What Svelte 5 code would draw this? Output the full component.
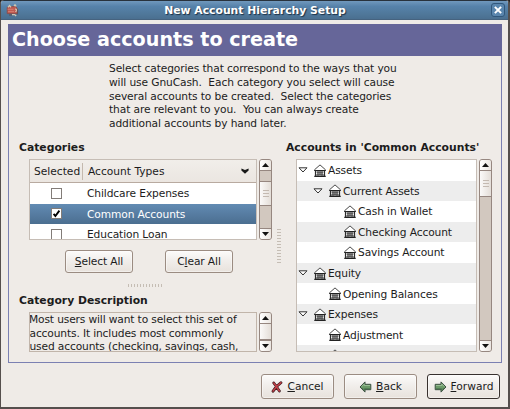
<script>
  const types = [
    { name: 'Childcare Expenses', on: false },
    { name: 'Common Accounts', on: true },
    { name: 'Education Loan', on: false }
  ];
  const tree = [
    { name: 'Assets', depth: 0, open: true },
    { name: 'Current Assets', depth: 1, open: true },
    { name: 'Cash in Wallet', depth: 2 },
    { name: 'Checking Account', depth: 2 },
    { name: 'Savings Account', depth: 2 },
    { name: 'Equity', depth: 0, open: true },
    { name: 'Opening Balances', depth: 1 },
    { name: 'Expenses', depth: 0, open: true },
    { name: 'Adjustment', depth: 1 },
    { name: '', depth: 1 }
  ];
</script>

{#snippet scrollbar(before, size, height)}
  <div class="scroll" style="height:{height}px">
    <div class="arrow"><svg width="7" height="4" viewBox="0 0 7 4"><path d="M0 4L3.5 0L7 4Z" fill="#111" /></svg></div>
    <div class="track">
      <div class="thumb" class:offset={before > 0} style="margin-top:{before}px;height:{size}px">
        {#if size > 18}<i></i><i></i><i></i>{/if}
      </div>
    </div>
    <div class="arrow low"><svg width="7" height="4" viewBox="0 0 7 4"><path d="M0 0L3.5 4L7 0Z" fill="#111" /></svg></div>
  </div>
{/snippet}

{#snippet arrowIcon(flip)}
  <svg class="ico" width="13" height="12" viewBox="0 0 13 12">
    <g transform={flip ? 'translate(13 0) scale(-1 1)' : ''}>
      <path d="M1 6L6 .9V3.3H11.8V8.7H6V11.1Z" fill="#6b9a68" stroke="#3c5042" stroke-width="1" />
      <path d="M2.6 5.5L5.2 3.2V4.5H11" fill="none" stroke="#a4c6a0" stroke-width=".8" />
      <path d="M3 7L5.5 9V7.7H11" fill="none" stroke="#466f4b" stroke-width=".8" />
    </g>
  </svg>
{/snippet}

<div class="window">
  <header class="title">
    <svg class="app" width="13" height="13" viewBox="0 0 13 13">
      <path d="M1.2 3.5L3 2.6H9.6L11 4V9.6H1.2Z" fill="#c05a50" stroke="#8a4a46" stroke-width=".8" />
      <path d="M1.6 5.3H7.5M2 7.6H8" stroke="#d98679" stroke-width=".8" />
      <path d="M2 3.4L3.5 1.6L5 3.2M8 2.2L9 .8L10.2 2.4M9.2 4.8L10.8 6L9.6 8M6 10.6H8.6L10.2 12" fill="none" stroke="#cfc7b4" stroke-width="1.3" />
      <path d="M3 11H6M11.6 5V10.5" stroke="#5f4f55" stroke-width="1" />
    </svg>
    <span>New Account Hierarchy Setup</span>
    <div class="close"><svg width="8" height="8" viewBox="0 0 8 8"><path d="M1.6 1.6L6.4 6.4M6.4 1.6L1.6 6.4" stroke="#fff" stroke-width="2" stroke-linecap="square" /></svg></div>
  </header>
  <main>
    <h1>Choose accounts to create</h1>
    <div class="intro">
      <div>Select categories that correspond to the ways that you</div>
      <div>will use GnuCash.&nbsp; Each category you select will cause</div>
      <div>several accounts to be created.&nbsp; Select the categories</div>
      <div>that are relevant to you.&nbsp; You can always create</div>
      <div>additional accounts by hand later.</div>
    </div>
    <div class="panes">
      <section class="left">
        <h2>Categories</h2>
        <div class="scroller">
          <div class="table">
            <div class="thead">
              <span class="c1">Selected</span><span class="c2">Account Types</span>
              <svg width="8" height="6" viewBox="0 0 8 6"><path d="M.4 .5L4 2L7.6 .5V2.4L4 5.8L.4 2.4Z" fill="#1a1a1a" /></svg>
            </div>
            {#each types as t}
              <div class="row" class:sel={t.on}>
                <span class="box">{#if t.on}<svg width="9" height="9" viewBox="0 0 9 9"><path d="M1.6 4.8L3.4 7L7.4 1.6" fill="none" stroke="#000" stroke-width="1.9" /></svg>{/if}</span>
                <span class="tname">{t.name}</span>
              </div>
            {/each}
          </div>
          {@render scrollbar(10, 25, 81)}
        </div>
        <div class="pair">
          <button class="small"><span><u>S</u>elect All</span></button>
          <button class="small"><span>C<u>l</u>ear All</span></button>
        </div>
        <div class="hgrip"></div>
        <h2 class="desc-title">Category Description</h2>
        <div class="scroller">
          <div class="desc">
            <div>Most users will want to select this set of</div>
            <div>accounts. It includes most commonly</div>
            <div>used accounts (checking, savings, cash,</div>
          </div>
          {@render scrollbar(0, 16, 40)}
        </div>
      </section>
      <div class="vgrip"></div>
      <section class="right">
        <h2>Accounts in 'Common Accounts'</h2>
        <div class="scroller">
          <div class="tree">
            {#each tree as n, i}
              <div class="node" class:alt={i % 2 === 1} style="padding-left:{1 + n.depth * 15}px">
                <span class="exp">{#if n.open}<svg width="10" height="6" viewBox="0 0 10 6"><path d="M1 .8H9L5 5Z" fill="#fff" stroke="#333" /></svg>{/if}</span>
                <svg class="bank" width="12" height="13" viewBox="0 0 12 13">
                  <path d="M.7 5.6L6 .9L11.3 5.6V6.5H.7Z" fill="#fff" stroke="#4a4a4a" stroke-width="1" />
                  <path d="M.3 6.5H11.7M.3 12.4H11.7" stroke="#222" stroke-width="1.2" />
                  <path d="M1.5 6.5V12.5M4 7.5V11.5M6 7.5V11M8 7.5V11.5M10.5 6.5V12.5" stroke="#2a2a2a" stroke-width="1.2" />
                  <path d="M2.5 8H9.5M1 11H11" stroke="#333" stroke-width=".9" />
                </svg>
                <span class="label">{n.name}</span>
              </div>
            {/each}
          </div>
          {@render scrollbar(0, 26, 193)}
        </div>
      </section>
    </div>
  </main>
  <footer>
    <button class="cancel">
      <svg class="ico" width="12" height="12" viewBox="0 0 12 12"><path d="M2.8 2Q5 5 8.4 10M10 1.7Q5 5.3 2 10.2" fill="none" stroke="#3b1c1f" stroke-width="2.8" stroke-linecap="round" /><path d="M2.8 2Q5 5 8.4 10M10 1.7Q5 5.3 2 10.2" fill="none" stroke="#c03f48" stroke-width="1.5" stroke-linecap="round" /></svg>
      <span><u>C</u>ancel</span>
    </button>
    <button class="back">{@render arrowIcon(false)}<span><u>B</u>ack</span></button>
    <button class="forward">{@render arrowIcon(true)}<span><u>F</u>orward</span></button>
  </footer>
</div>

<style>
  :global(body) { background: #202020; overflow: hidden; }
  .window, .window * { box-sizing: border-box; }
  .window {
    width: 510px; height: 409px; display: flex; flex-direction: column;
    background: #efebe7; color: #1c1c1c;
    border: solid #554f4d; border-width: 0 2px 2px 1px;
    font: 10.67px/14px "DejaVu Sans", sans-serif; letter-spacing: -.11px; white-space: nowrap;
    border-radius: 4px 4px 0 0; overflow: hidden;
  }
  .title {
    flex: none; height: 20px; display: flex; align-items: center; justify-content: space-between;
    padding: 0 3px 0 5px; border-top: 1px solid #28323c; border-bottom: 1px solid #46637f;
    background: linear-gradient(#7098bd, #5682aa 30%, #4f7799 75%, #4a6f90);
    color: #fff; font-size: 10.8px; letter-spacing: 0; font-weight: bold; text-shadow: 1px 1px 1px #1c3146;
  }
  .title span { padding-top: 1px; }
  .close {
    width: 14px; height: 14px; border: 1px solid #31577b; border-radius: 3px;
    display: flex; align-items: center; justify-content: center; background: #5a86ae;
  }
  main {
    flex: none; width: 494px; height: 339px; margin: 4px 0 0 7px;
    border: 1px solid #7b80b2; border-top: 0;
  }
  h1 {
    margin: 0 -1px; height: 32px; padding: 1px 0 0 4px; background: #666699; color: #fff;
    font: bold 19.15px/30px "DejaVu Sans", sans-serif; letter-spacing: 0;
  }
  .intro { padding: 6px 0 0 100px; height: 84px; line-height: 13.8px; }
  .panes { display: flex; }
  h2 { margin: 0; padding-top: 1px; font: bold 10.8px/14px "DejaVu Sans", sans-serif; letter-spacing: 0; height: 19px; }
  .left { width: 254px; flex: none; padding-left: 10px; }
  .right { flex: none; }
  .scroller { display: flex; gap: 2px; padding-left: 10px; }
  .table { flex: none; width: 228px; height: 81px; overflow: hidden; background: #fff; border: 1px solid #c6bdb5; }
  .thead {
    height: 23px; display: flex; align-items: center; border-bottom: 1px solid #b8aaa0;
    background: linear-gradient(#f1eeea, #ebe6e1);
  }
  .c1 { width: 53px; padding: 1px 0 0 4px; border-right: 1px solid #c4b9ae; line-height: 16px; letter-spacing: 0; }
  .c2 { width: 158px; padding: 1px 0 0 5px; line-height: 16px; letter-spacing: 0; }
  .row { height: 20.5px; display: flex; align-items: center; padding-left: 21px; }
  .sel { color: #fff; background: linear-gradient(#628bb3, #4b6e90); }
  .box { width: 11px; height: 11px; border: 1px solid #827c78; background: #fff; display: flex; }
  .tname { padding: 2px 0 0 25px; }
  .scroll { flex: none; width: 13px; display: flex; flex-direction: column; border: 1px solid #968780; border-radius: 3px; background: #d2c8bf; overflow: hidden; }
  .arrow { flex: none; height: 11px; background: linear-gradient(90deg, #fff, #eae5e0); border-bottom: 1px solid #968780; display: flex; align-items: center; justify-content: center; }
  .low { border-bottom: 0; border-top: 1px solid #968780; }
  .track { flex: 1; }
  .thumb {
    border-bottom: 1px solid #968780; background: linear-gradient(90deg, #fbfaf9, #e4ded8);
    display: flex; flex-direction: column; align-items: center; justify-content: center; gap: 2px;
  }
  .offset { border-top: 1px solid #968780; }
  .thumb i { width: 6px; height: 1px; background: #c4bab1; }
  .pair { display: flex; gap: 32px; padding: 10px 0 0 46px; }
  button {
    margin: 0; padding: 0; color: #1c1c1c; font: inherit; letter-spacing: inherit; border: 1px solid #9b8c82; border-radius: 3px;
    background: linear-gradient(#fcfbfa, #f1eeeb 45%, #e8e2dc); display: flex; align-items: center; justify-content: center;
    box-shadow: inset 0 0 0 1px #ffffff70;
  }
  .small { width: 68px; height: 23px; }
  u { text-decoration-thickness: 1px; text-underline-offset: 1px; }
  .hgrip { width: 34px; height: 3px; margin: 11px 0 0 109px; background: repeating-linear-gradient(90deg, #c5bdb4 0 1px, #efebe7 1px 3px); }
  .desc-title { margin-top: 6px; }
  .desc { flex: none; width: 228px; height: 40px; overflow: hidden; border: 1px solid #c1b5aa; line-height: 13.6px; letter-spacing: -.14px; }
  .desc div:first-child { margin-left: -1px; }
  .desc div { margin-left: -.5px; }
  .vgrip { flex: none; width: 4px; height: 34px; margin: 89px 5px 0 14px; background: repeating-linear-gradient(#c5bdb4 0 1px, #efebe7 1px 3px); }
  .tree { flex: none; width: 181px; height: 193px; background: #fff; border: 1px solid #c6bdb5; overflow: hidden; }
  .node { height: 20.55px; display: flex; align-items: center; }
  .alt { background: #ededed; }
  .exp { width: 16px; display: flex; }
  .bank { margin-right: 2px; }
  .label { padding-top: 2px; }
  footer { display: flex; padding: 11px 0 0 260px; }
  footer button { height: 25px; width: 73px; gap: 4px; letter-spacing: 0; }
  .back { margin-left: 10px; }
  .forward { margin-left: 10px; border-color: #38312e; }
</style>
